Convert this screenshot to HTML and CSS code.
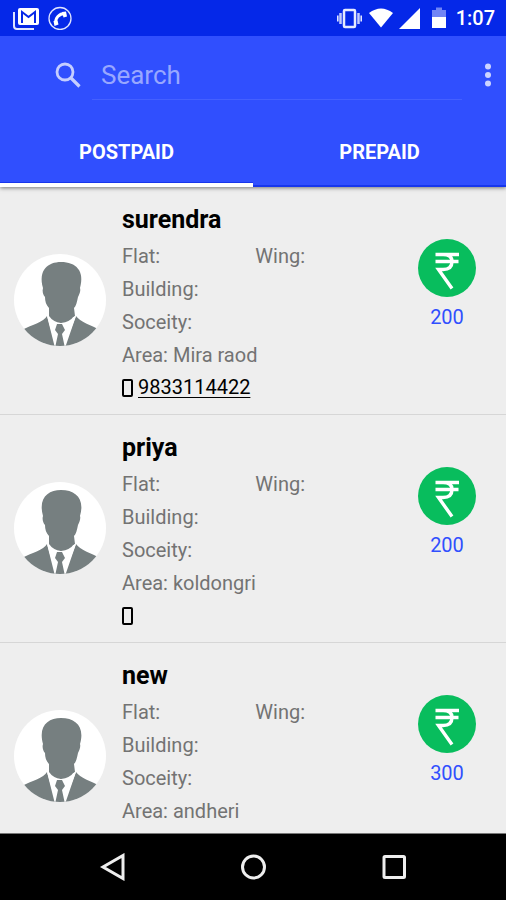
FILE: index.html
```html
<!DOCTYPE html>
<html lang="en">
<head>
<meta charset="utf-8">
<meta name="viewport" content="width=device-width, initial-scale=1">
<title>Customers</title>
<link rel="stylesheet" href="styles.css">
</head>
<body>
<svg class="sprite" aria-hidden="true">
  <symbol id="avatar" viewBox="0 0 92 92">
    <clipPath id="disc"><circle cx="46" cy="46" r="46"/></clipPath>
    <circle cx="46" cy="46" r="46" fill="#fff"/>
    <g clip-path="url(#disc)" fill="#767f80">
      <path d="M29 34C24 16 34 8 47 8c15 0 24 9 19 26 1 3-1 7-2 9-1 5-2 9-4 11l1 8-14 7-12-8v-7c-3-3-4-7-4-11-2-2-3-6-2-9Z"/>
      <path d="M33 62C30 68 17 71 8 76L8 93H42Z"/>
      <path d="M62 62C66 68 77 71 86 76L86 93H50Z"/>
      <path d="M33 62 46 69 62 62 51 94H41Z" fill="#fff"/>
      <path d="M35 57v5q4 6 12 7 9-1 13-7v-5Z"/>
      <path d="M43 70h5l3 6-3 4 3 14H41l3-14-3-4Z"/>
    </g>
  </symbol>
  <symbol id="rupee" viewBox="0 0 58 58">
    <circle cx="29" cy="29" r="29" fill="#08bd5d"/>
    <path d="M17.500 15.500H41M17.500 22.500H40.500M19 15.500h6c6 0 9 2 9 7 0 6-4 8-9 8h-4.500L34 49.500" fill="none" stroke="#fff" stroke-width="3.400"/>
  </symbol>
  <symbol id="phone" viewBox="0 0 11 18">
    <rect x="1" y="1" width="9" height="16" rx="1" fill="none" stroke="#000" stroke-width="2"/>
  </symbol>
</svg>

<header class="header">
  <div class="status">
    <svg class="status-icon mail-icon" viewBox="0 0 26 24" aria-hidden="true">
      <path d="M1 6v14q0 3 3 3h17" fill="none" stroke="#dfe4ff" stroke-width="2"/>
      <rect x="5" y="2" width="21" height="17" rx="2" fill="#fff"/>
      <path d="M9 17V6l6.500 5L22 6v11" fill="none" stroke="#0528e8" stroke-width="2"/>
    </svg>
    <svg class="status-icon" viewBox="0 0 24 24" aria-hidden="true">
      <circle cx="12" cy="12.500" r="11" fill="none" stroke="#dfe4ff" stroke-width="1.300"/>
      <path d="M7.500 18C7 12 11 7.500 17 7.500" fill="none" stroke="#fff" stroke-width="2.800"/>
      <path d="M14 6 18 5.500l1 5-3.500 1ZM5.500 15l4-.5 1 4-4 1.500Z" fill="#fff"/>
    </svg>
    <span class="spacer"></span>
    <svg class="status-icon" viewBox="0 0 26 24" aria-hidden="true">
      <rect x="7" y="4" width="11" height="17" rx="1" fill="none" stroke="#e6eaff" stroke-width="2.500"/>
      <path d="M3.500 7v11M21.500 7v11" stroke="#c3ccff" stroke-width="2.500"/>
      <path d="M.8 9.500v6M24.200 9.500v6" stroke="#dfe4ff" stroke-width="1.600"/>
    </svg>
    <svg class="status-icon" viewBox="0 0 26 24" aria-hidden="true"><path d="M1 7Q13-2 25 7L13 21.500Z" fill="#fff"/></svg>
    <svg class="status-icon" viewBox="0 0 22 24" aria-hidden="true"><path d="M21 2V23H0Z" fill="#fff"/></svg>
    <svg class="battery" viewBox="0 0 14 24" aria-hidden="true">
      <path d="M0 11V4h4V1.500h6V4h4v7Z" fill="#7185f5"/><path d="M0 11h14v11H0Z" fill="#fff"/>
    </svg>
    <time class="clock">1:07</time>
  </div>

  <div class="toolbar">
    <label class="search-label" for="search" aria-label="Search">
      <svg class="search-icon" viewBox="0 0 26 26" aria-hidden="true">
        <circle cx="10" cy="10" r="8" fill="none" stroke="#c5ceff" stroke-width="2.800"/>
        <path d="m16 16 8.500 8.500" stroke="#c5ceff" stroke-width="3.200"/>
      </svg>
    </label>
    <input class="search" id="search" type="text" placeholder="Search">
    <button class="more" type="button" aria-label="More options">
      <svg class="more-icon" viewBox="0 0 8 24" aria-hidden="true"><g fill="#ccd4ff"><circle cx="4" cy="3.500" r="3"/><circle cx="4" cy="12" r="3"/><circle cx="4" cy="20.500" r="3"/></g></svg>
    </button>
  </div>

  <div class="tabs" role="tablist">
    <button class="tab tab-active" type="button" role="tab" aria-selected="true">POSTPAID</button>
    <button class="tab" type="button" role="tab" aria-selected="false">PREPAID</button>
  </div>
</header>

<main class="list">
  <article class="row">
    <svg class="avatar" aria-hidden="true"><use href="#avatar"/></svg>
    <div class="details">
      <h2 class="name">surendra</h2>
      <p class="line split"><span>Flat:</span><span>Wing:</span></p>
      <p class="line">Building:</p>
      <p class="line">Soceity:</p>
      <p class="line">Area: Mira raod</p>
      <p class="line contact"><svg class="phone" aria-hidden="true"><use href="#phone"/></svg><a class="number" href="tel:9833114422">9833114422</a></p>
    </div>
    <div class="amount"><svg class="rupee" aria-hidden="true"><use href="#rupee"/></svg><span>200</span></div>
  </article>
  <article class="row">
    <svg class="avatar" aria-hidden="true"><use href="#avatar"/></svg>
    <div class="details">
      <h2 class="name">priya</h2>
      <p class="line split"><span>Flat:</span><span>Wing:</span></p>
      <p class="line">Building:</p>
      <p class="line">Soceity:</p>
      <p class="line">Area: koldongri</p>
      <p class="line contact"><svg class="phone" aria-hidden="true"><use href="#phone"/></svg></p>
    </div>
    <div class="amount"><svg class="rupee" aria-hidden="true"><use href="#rupee"/></svg><span>200</span></div>
  </article>
  <article class="row">
    <svg class="avatar" aria-hidden="true"><use href="#avatar"/></svg>
    <div class="details">
      <h2 class="name">new</h2>
      <p class="line split"><span>Flat:</span><span>Wing:</span></p>
      <p class="line">Building:</p>
      <p class="line">Soceity:</p>
      <p class="line">Area: andheri</p>
      <p class="line contact"><svg class="phone" aria-hidden="true"><use href="#phone"/></svg></p>
    </div>
    <div class="amount"><svg class="rupee" aria-hidden="true"><use href="#rupee"/></svg><span>300</span></div>
  </article>
</main>

<nav class="navbar" aria-label="System">
  <button class="nav-button" type="button" aria-label="Back"><svg class="nav-icon" viewBox="0 0 28 28"><path d="M25 2.500V25.500L5 14Z"/></svg></button>
  <button class="nav-button" type="button" aria-label="Home"><svg class="nav-icon" viewBox="0 0 28 28"><circle cx="14.500" cy="14" r="11"/></svg></button>
  <button class="nav-button" type="button" aria-label="Recent apps"><svg class="nav-icon" viewBox="0 0 28 28"><rect x="4" y="3.500" width="20.500" height="21" rx="1"/></svg></button>
</nav>
</body>
</html>
```
FILE: styles.css
```css
* {
  box-sizing: border-box;
}

body {
  display: flex;
  flex-direction: column;
  height: 100vh;
  margin: 0;
  background: #eee;
  color: #000;
  font-family: Roboto, sans-serif;
  font-size: 20px;
}

button {
  padding: 0;
  border: 0;
  background: none;
  color: inherit;
  font: inherit;
}

svg {
  display: block;
  flex: none;
}

.sprite {
  position: absolute;
  width: 0;
  height: 0;
}

.header {
  position: relative;
  flex: none;
  background: #304ffe;
  color: #fff;
  box-shadow: 0 1px 4px rgba(0, 0, 0, 0.5);
}

.status {
  display: flex;
  align-items: center;
  gap: 5px;
  height: 36px;
  padding: 0 11px 0 13px;
  background: #0528e8;
}

.status-icon {
  height: 24px;
}

.mail-icon {
  margin-right: 4px;
}

.battery {
  height: 24px;
  margin: 0 5px 0 6px;
}

.spacer {
  flex: 1;
}

.clock {
  font-weight: 500;
}

.toolbar {
  display: flex;
  align-items: center;
  height: 78px;
  padding-left: 55px;
}

.search-label {
  margin-right: 11px;
}

.search-icon {
  width: 26px;
  height: 26px;
}

.search {
  flex: 1;
  min-width: 0;
  height: 50px;
  padding: 0 9px;
  border: 0;
  border-bottom: 1px solid #4460ff;
  outline: 0;
  background: none;
  color: #fff;
  font: inherit;
  font-size: 26px;
}

.search::placeholder {
  color: #98a7ff;
  opacity: 1;
}

.more {
  display: flex;
  justify-content: center;
  width: 44px;
  padding-left: 8px;
}

.more-icon {
  width: 8px;
  height: 24px;
}

.tabs {
  display: flex;
}

.tab {
  flex: 1;
  height: 73px;
  padding-top: 3px;
  box-shadow: inset 0 -2px #1736ed;
  font-weight: 700;
}

.tab-active {
  box-shadow: inset 0 -4px #fff, inset 0 -5px #1736ed;
}

.list {
  flex: 1;
  min-height: 0;
  overflow: hidden;
}

.row {
  display: grid;
  grid-template-columns: 92px 1fr 58px;
  column-gap: 16px;
  padding: 13px 30px 11px 14px;
  border-bottom: 1px solid #d6d6d6;
}

.avatar {
  width: 92px;
  height: 92px;
  margin-top: 54px;
}

.name,
.line {
  margin: 0;
}

.name {
  font-size: 25px;
  font-weight: 700;
  line-height: 40px;
}

.line {
  color: #737373;
  line-height: 33px;
}

.split {
  display: grid;
  grid-template-columns: 10fr 11fr;
}

.contact {
  display: flex;
  align-items: center;
  gap: 5px;
  height: 31px;
}

.phone {
  width: 11px;
  height: 18px;
}

.number {
  color: #000;
  text-decoration: underline;
  text-decoration-thickness: 1px;
  text-underline-offset: 3px;
}

.amount {
  display: grid;
  align-self: start;
  justify-items: center;
  row-gap: 8px;
  padding-top: 39px;
  color: #304ffe;
}

.rupee {
  width: 58px;
  height: 58px;
}

.navbar {
  display: flex;
  justify-content: center;
  flex: none;
  height: 67px;
  padding: 0 42px;
  border-top: 1px solid #777;
  background: #000;
}

.nav-button {
  display: grid;
  flex: 1;
  place-items: center;
}

.nav-icon {
  width: 28px;
  height: 28px;
  fill: none;
  stroke: #eee;
  stroke-width: 3;
}
```
